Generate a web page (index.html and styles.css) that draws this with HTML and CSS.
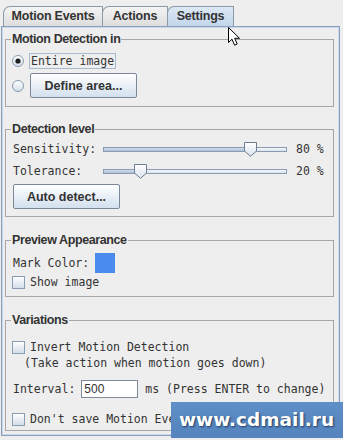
FILE: index.html
```html
<!DOCTYPE html>
<html lang="en">
  <head>
    <meta charset="UTF-8" />
    <meta name="viewport" content="width=device-width, initial-scale=1.0" />
    <title>Motion Settings</title>
    <link rel="stylesheet" href="styles.css">
  </head>

  <body>
    <div class="window">
      <div class="tabs">
        <div class="tab tab-events">Motion Events</div>
        <div class="tab tab-actions">Actions</div>
        <div class="tab tab-settings active">Settings</div>
      </div>

      <div class="pane">
        <fieldset class="group group-area">
          <legend>Motion Detection in</legend>
          <div class="row row-entire">
            <svg class="radio" width="12" height="12" viewBox="0 0 12 12">
              <defs>
                <linearGradient id="rg" x1="0" y1="0" x2="0" y2="1">
                  <stop offset="0" stop-color="#ffffff" />
                  <stop offset="1" stop-color="#d3deea" />
                </linearGradient>
              </defs>
              <circle cx="6" cy="6" r="5.5" fill="url(#rg)" stroke="#8a9bb0" />
              <circle cx="6" cy="6" r="2.6" fill="#1e1e1e" />
            </svg>
            <span class="focus">Entire image</span>
          </div>
          <div class="row row-define">
            <svg class="radio" width="12" height="12" viewBox="0 0 12 12">
              <circle cx="6" cy="6" r="5.5" fill="url(#rg)" stroke="#8a9bb0" />
            </svg>
            <button class="btn">Define area...</button>
          </div>
        </fieldset>

        <fieldset class="group group-level">
          <legend>Detection level</legend>
          <div class="row slider-row">
            <span class="slider-label">Sensitivity:</span>
            <div class="slider">
              <div class="track"><div class="fill" style="width: 80%"></div></div>
              <svg class="thumb" style="left: calc(80% - 7px)" width="15" height="15" viewBox="0 0 15 15">
                <defs>
                  <linearGradient id="tg" x1="0" y1="0" x2="0" y2="1">
                    <stop offset="0" stop-color="#ffffff" />
                    <stop offset="1" stop-color="#d9e2ed" />
                  </linearGradient>
                </defs>
                <path d="M1.5 0.5 H13.5 V9 L7.5 14.3 L1.5 9 Z" fill="url(#tg)" stroke="#6f7e90" />
              </svg>
            </div>
            <span class="slider-value">80 %</span>
          </div>
          <div class="row slider-row row-tol">
            <span class="slider-label">Tolerance:</span>
            <div class="slider">
              <div class="track"><div class="fill" style="width: 20%"></div></div>
              <svg class="thumb" style="left: calc(20% - 7px)" width="15" height="15" viewBox="0 0 15 15">
                <path d="M1.5 0.5 H13.5 V9 L7.5 14.3 L1.5 9 Z" fill="url(#tg)" stroke="#6f7e90" />
              </svg>
            </div>
            <span class="slider-value">20 %</span>
          </div>
          <button class="btn btn-auto">Auto detect...</button>
        </fieldset>

        <fieldset class="group group-preview">
          <legend>Preview Appearance</legend>
          <div class="row row-color">
            <span>Mark Color:</span>
            <span class="swatch"></span>
          </div>
          <div class="row row-show">
            <span class="check"></span>
            <span>Show image</span>
          </div>
        </fieldset>

        <fieldset class="group group-var">
          <legend>Variations</legend>
          <div class="row row-invert">
            <span class="check"></span>
            <span>Invert Motion Detection</span>
          </div>
          <div class="row row-note">(Take action when motion goes down)</div>
          <div class="row row-interval">
            <span>Interval:</span>
            <span class="field">500</span>
            <span>ms (Press ENTER to change)</span>
          </div>
          <div class="row row-save">
            <span class="check"></span>
            <span>Don't save Motion Events</span>
          </div>
        </fieldset>
      </div>

      <svg class="cursor" width="14" height="20" viewBox="0 0 14 20">
        <path d="M0.5 0.5 V15.5 L4 12.2 L6.6 18.2 L9.2 17 L6.7 11.3 H11.5 Z" fill="#ffffff" stroke="#000000" />
      </svg>

      <div class="watermark">www.cdmail.ru</div>
    </div>
  </body>
</html>
```

FILE: styles.css
```css
body {
  margin: 0;
  background-color: #eeeeee;
  font-family: "DejaVu Sans Mono", "Liberation Mono", monospace;
  font-size: 11.5px;
  color: #333;
}

.window {
  position: relative;
  width: 343px;
  height: 440px;
  overflow: hidden;
}

/* tabs */

.tabs {
  display: flex;
  height: 20px;
  padding: 6px 0 0 3px;
}

.tab {
  box-sizing: border-box;
  height: 20px;
  border: 1px solid #8e99a6;
  border-bottom: none;
  border-top-left-radius: 7px;
  margin-right: -1px;
  background: linear-gradient(#f4f4f4, #dddddd);
  font: bold 12.5px "Liberation Sans", Arial, sans-serif;
  letter-spacing: -0.2px;
  line-height: 19px;
  text-align: center;
  color: #333;
}

.tab-events {
  width: 100px;
}

.tab-actions {
  width: 66px;
}

.tab-settings {
  width: 67px;
}

.tab.active {
  background: linear-gradient(#dce8f5, #c3d6ec);
}

/* content pane */

.pane {
  box-sizing: border-box;
  width: 339px;
  height: 410px;
  margin-left: 1px;
  padding: 5px 5px 0 3px;
  border: 1px solid #8b9fb9;
  box-shadow: inset 0 0 0 1px #c8d8eb;
}

.group {
  margin: 0;
  padding: 0 5px;
  border: 1px solid #a6a6a6;
}

.group legend {
  padding: 0 1px;
  font: bold 12.5px "Liberation Sans", Arial, sans-serif;
  letter-spacing: -0.4px;
  line-height: 14px;
  color: #333;
}

.group-area {
  padding-top: 7px;
  padding-bottom: 8px;
}

.group-level {
  margin-top: 15px;
  padding-top: 5px;
  padding-bottom: 7px;
}

.group-preview {
  margin-top: 16px;
  padding-top: 6px;
  padding-bottom: 7px;
}

.group-var {
  margin-top: 16px;
  padding-top: 12px;
  padding-bottom: 3px;
}

.row {
  display: flex;
  align-items: center;
  height: 16px;
  white-space: nowrap;
}

/* radios and buttons */

.radio {
  margin-left: 1px;
  flex: none;
}

.focus {
  margin-left: 5px;
  padding: 0 1px;
  height: 14px;
  line-height: 14px;
  border: 1px solid #a9bccf;
}

.row-define {
  height: 25px;
  margin-top: 4px;
}

.btn {
  box-sizing: border-box;
  width: 107px;
  height: 25px;
  padding: 0;
  border: 1px solid #7a8899;
  border-radius: 2px;
  background: linear-gradient(#ffffff, #d3e0ee);
  font: bold 12.5px "Liberation Sans", Arial, sans-serif;
  color: #333;
}

.row-define .btn {
  margin-left: 6px;
}

.btn-auto {
  display: block;
  margin: 5px 0 0 2px;
}

/* sliders */

.slider-row {
  padding-left: 2px;
}

.row-tol {
  margin-top: 6px;
}

.slider-label {
  width: 90px;
}

.slider {
  position: relative;
  width: 184px;
  height: 16px;
}

.track {
  position: absolute;
  top: 6px;
  left: 0;
  right: 0;
  height: 5px;
  box-sizing: border-box;
  border: 1px solid #8a9bb1;
  background: linear-gradient(#f6f8fb, #d8e1ec);
}

.fill {
  height: 100%;
  background: linear-gradient(#d2e0ef, #aebfd4);
}

.thumb {
  position: absolute;
  top: 1px;
}

.slider-value {
  margin-left: 9px;
}

/* preview */

.row-color {
  height: 20px;
  padding-left: 2px;
}

.swatch {
  width: 20px;
  height: 20px;
  margin-left: 6px;
  background-color: #4a8cee;
}

.row-show {
  margin-top: 2px;
  height: 14px;
}

.check {
  box-sizing: border-box;
  flex: none;
  width: 13px;
  height: 13px;
  margin: 0 5px 0 1px;
  border: 1px solid #8b9db2;
  background: linear-gradient(#fefefe, #d3deea);
}

/* variations */

.row-note {
  padding-left: 13px;
}

.row-interval {
  height: 18px;
  margin-top: 9px;
  padding-left: 2px;
}

.field {
  box-sizing: border-box;
  width: 57px;
  height: 18px;
  margin: 0 7px 0 6px;
  padding-left: 2px;
  border: 1px solid #7f8b98;
  background-color: #fff;
  font: 12px "Liberation Sans", Arial, sans-serif;
  line-height: 16px;
}

.row-save {
  margin-top: 13px;
}

/* overlays */

.cursor {
  position: absolute;
  left: 228px;
  top: 27px;
}

.watermark {
  position: absolute;
  left: 171px;
  top: 402px;
  width: 172px;
  height: 36px;
  padding-left: 8px;
  box-sizing: border-box;
  background: linear-gradient(#5f8fc7, #5583bd);
  font: bold 18.5px "DejaVu Sans", Verdana, sans-serif;
  line-height: 36px;
  white-space: nowrap;
  color: #fff;
  text-shadow: 1px 1px 2px #1d3a5e;
}
```
